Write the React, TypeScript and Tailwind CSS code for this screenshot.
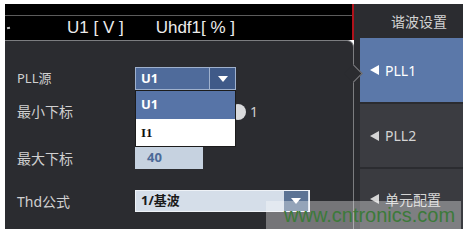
import React from "react";

const sans = { fontFamily: '"Noto Sans", "Noto Sans CJK SC", sans-serif' };

function Caret({ className = "" }: { className?: string }) {
  return (
    <svg width="10" height="6" viewBox="0 0 10 6" className={className}>
      <path d="M0 0 H10 L5 6 Z" fill="#ffffff" />
    </svg>
  );
}

function TabArrow() {
  return (
    <svg width="9" height="10" viewBox="0 0 9 10" className="mr-[6px]">
      <path d="M9 0 V10 L0 5 Z" fill="currentColor" />
    </svg>
  );
}

export default function App() {
  return (
    <div
      className="relative flex h-[231px] w-[467px] overflow-hidden bg-white pb-[2px] pl-[5px] pr-[4px] pt-[4px]"
      style={sans}
    >
      {/* left: readout strip + settings panel */}
      <div className="flex w-[349px] flex-col">
        <div className="flex h-[36px] flex-col border-r-2 border-[#b0121b] bg-black">
          <div className="h-[12px] border-b border-[#5c5c5c]" />
          <div
            className="flex h-[23px] items-center text-[17px] leading-none text-[#ececec]"
            style={{ fontFamily: '"Liberation Sans", Arial, sans-serif' }}
          >
            <span className="ml-[2px] h-[2px] w-[3px] -rotate-12 bg-[#bbbbbb]" />
            <span className="ml-[57px] whitespace-pre">U1 [ V ]</span>
            <span className="ml-[32px] whitespace-pre">Uhdf1[ % ]</span>
          </div>
        </div>

        <div className="relative flex-1 rounded-tr-[7px] border-r border-t border-[#7c7d80] bg-[#2b2c30] pl-[12px] pt-[26px] text-[13px] text-[#d0d0d0]">
          <div className="absolute right-[-7px] top-[26px] z-10 h-[13px] w-[13px] rotate-45 border-r border-t border-[#7c7d80] bg-[#2b2c30]" />

          {/* PLL源 */}
          <div className="relative flex h-[23px] items-center">
            <span className="w-[118px]">PLL源</span>
            <div className="flex h-[23px] w-[101px] border border-[#9fb1cd] bg-[#4f6b9b]">
              <span className="flex flex-1 items-center pl-[5px] text-[13px] font-bold text-white">U1</span>
              <span className="flex w-[26px] items-center justify-center border-l border-[#9fb1cd] bg-[#3f5a88]">
                <Caret />
              </span>
            </div>
            <div className="absolute left-[118px] top-[23px] z-20 flex w-[101px] flex-col border border-[#1c1c1c]">
              <div className="flex h-[28px] items-center bg-[#5774a7] pl-[5px] font-bold text-white">U1</div>
              <div
                className="flex h-[27px] items-center bg-white pl-[5px] text-[13px] font-bold text-[#111]"
                style={{ fontFamily: '"Liberation Serif", serif' }}
              >
                I1
              </div>
            </div>
          </div>

          {/* 最小下标 */}
          <div className="mt-[10px] flex h-[23px] items-center">
            <span className="w-[118px] text-[14px]">最小下标</span>
            <span className="ml-[95px] h-[16px] w-[16px] rounded-full bg-[#d9dadc]" />
            <span className="ml-[4px] text-[14px] text-[#cfcfcf]">1</span>
          </div>

          {/* 最大下标 */}
          <div className="mt-[24px] flex h-[22px] items-center">
            <span className="w-[118px] text-[14px]">最大下标</span>
            <div className="flex h-[22px] w-[68px] items-center bg-[#c6d2e0] pl-[12px] text-[13px] font-bold text-[#4c6a98]">
              40
            </div>
          </div>

          {/* Thd公式 */}
          <div className="mt-[21px] flex h-[22px] items-center">
            <span className="w-[118px] text-[14px]">Thd公式</span>
            <div className="flex h-[22px] w-[175px] border border-[#eef2f7] bg-[#d5dee9]">
              <span className="flex flex-1 items-center pl-[5px] text-[13px] font-bold text-[#1a1a1a]">1/基波</span>
              <span className="mr-px flex w-[24px] items-center justify-center bg-[#5b7394]">
                <Caret />
              </span>
            </div>
          </div>
        </div>
      </div>

      {/* right: tab column */}
      <div className="flex flex-1 flex-col bg-[#2b2c30]">
        <div className="flex h-[34px] items-center justify-end pr-[16px] text-[14px] text-[#d2d2d2]">
          谐波设置
        </div>
        <div className="ml-[6px] flex flex-1 flex-col gap-[2px] text-[14px]">
          <div className="flex h-[64px] items-center bg-[#5b78a9] pl-[10px] text-white">
            <TabArrow />
            PLL1
          </div>
          <div className="flex h-[63px] items-center bg-[#3b3c41] pl-[10px] text-[#d4d4d4]">
            <TabArrow />
            PLL2
          </div>
          <div className="flex flex-1 items-center bg-[#3a3b40] pl-[10px] text-[#d4d4d4]">
            <TabArrow />
            单元配置
          </div>
        </div>
      </div>

      {/* watermark */}
      <div className="absolute left-[266px] top-[201px] z-30 flex h-[28px] w-[195px] items-center bg-white/35 pl-[18px]">
        <span
          className="text-[20px] leading-none text-[#3c7a3a]"
          style={{ fontFamily: '"Liberation Sans", Arial, sans-serif' }}
        >
          www.cntronics.com
        </span>
      </div>
    </div>
  );
}
